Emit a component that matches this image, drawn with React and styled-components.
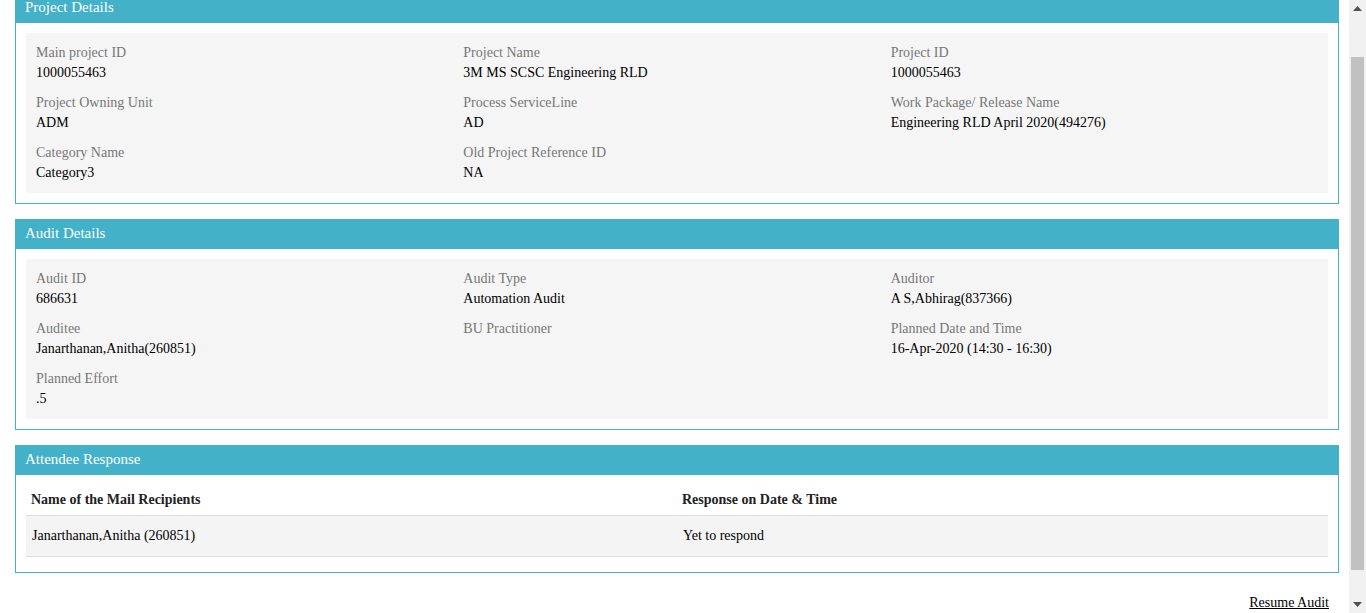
import React, {useLayoutEffect, useRef} from 'react';
import styled, {createGlobalStyle} from "styled-components";

const GlobalStyle = createGlobalStyle`
  html, body {
    margin: 0;
    padding: 0;
    height: 100%;
    overflow: hidden;
    background: #fff;
  }

  body {
    font-family: 'Liberation Serif', 'Times New Roman', serif;
    font-size: 14px;
    color: #000;
  }
`;

const Screen = styled.div`
  display: flex;
  height: 100vh;
`;

const Viewport = styled.div`
  flex: 1;
  min-width: 0;
  overflow: hidden;
`;

const Page = styled.div`
  padding: 0 10px 40px 15px;
`;

const Panel = styled.section`
  border: 1px solid #43b1c8;
  margin-bottom: 15px;
  background: #fff;
`;

const PanelHeading = styled.div`
  background: #43b1c8;
  color: #fff;
  height: 29px;
  line-height: 27px;
  padding: 0 9px;
  box-sizing: border-box;
  font-size: 15px;
`;

const PanelBody = styled.div`
  padding: ${({table}) => table ? '10px 10px 15px' : '10px'};
`;

const InfoGrid = styled.div`
  display: grid;
  grid-template-columns: repeat(3, 1fr);
  background: #f5f5f5;
  padding: 10px 10px 0;
`;

const Field = styled.div`
  margin-bottom: 10px;
  min-height: 40px;
`;

const FieldLabel = styled.div`
  color: #777;
  line-height: 20px;
`;

const FieldValue = styled.div`
  color: #000;
  line-height: 20px;
`;

const Table = styled.table`
  width: 100%;
  border-collapse: collapse;
`;

const Th = styled.th`
  width: 50%;
  text-align: left;
  font-weight: bold;
  color: #222;
  height: 30px;
  line-height: 20px;
  padding: 0 5px;
  border-bottom: 1px solid #ddd;
`;

const Td = styled.td`
  background: #f4f4f4;
  height: 40px;
  line-height: 20px;
  padding: 0 6px;
  border-bottom: 1px solid #ddd;
`;

const Footer = styled.div`
  display: flex;
  justify-content: flex-end;
  padding: 7px 10px 0 0;
`;

const ResumeLink = styled.a`
  color: #000;
  text-decoration: underline;
  cursor: pointer;
`;

const ScrollTrack = styled.div`
  width: 17px;
  flex-shrink: 0;
  background: #f1f1f1;
  display: flex;
  flex-direction: column;
  align-items: center;
`;

const Arrow = styled.div`
  height: 17px;
  width: 17px;
  display: flex;
  align-items: center;
  justify-content: center;
`;

const ThumbArea = styled.div`
  flex: 1;
  width: 100%;
  padding: 40px 2px 26px;
  box-sizing: border-box;
  display: flex;
`;

const Thumb = styled.div`
  flex: 1;
  background: #c1c1c1;
`;

const projectFields = [
    ['Main project ID', '1000055463'],
    ['Project Name', '3M MS SCSC Engineering RLD'],
    ['Project ID', '1000055463'],
    ['Project Owning Unit', 'ADM'],
    ['Process ServiceLine', 'AD'],
    ['Work Package/ Release Name', 'Engineering RLD April 2020(494276)'],
    ['Category Name', 'Category3'],
    ['Old Project Reference ID', 'NA'],
];

const auditFields = [
    ['Audit ID', '686631'],
    ['Audit Type', 'Automation Audit'],
    ['Auditor', 'A S,Abhirag(837366)'],
    ['Auditee', 'Janarthanan,Anitha(260851)'],
    ['BU Practitioner', ''],
    ['Planned Date and Time', '16-Apr-2020 (14:30 - 16:30)'],
    ['Planned Effort', '.5'],
];

const InfoPanel = ({title, fields}) => (
    <Panel>
        <PanelHeading>{title}</PanelHeading>
        <PanelBody>
            <InfoGrid>
                {fields.map(([label, value]) => (
                    <Field key={label}>
                        <FieldLabel>{label}</FieldLabel>
                        <FieldValue>{value}</FieldValue>
                    </Field>
                ))}
            </InfoGrid>
        </PanelBody>
    </Panel>
);

const Scrollbar = () => (
    <ScrollTrack>
        <Arrow>
            <svg width="9" height="5" viewBox="0 0 9 5"><path d="M0 5 L4.5 0 L9 5 Z" fill="#505050"/></svg>
        </Arrow>
        <ThumbArea><Thumb/></ThumbArea>
        <Arrow>
            <svg width="9" height="5" viewBox="0 0 9 5"><path d="M0 0 L9 0 L4.5 5 Z" fill="#505050"/></svg>
        </Arrow>
    </ScrollTrack>
);

const App = () => {
    const viewRef = useRef(null);

    useLayoutEffect(() => {
        if (viewRef.current) viewRef.current.scrollTop = 7;
    }, []);

    return (
        <Screen>
            <GlobalStyle/>
            <Viewport ref={viewRef}>
                <Page>
                    <InfoPanel title="Project Details" fields={projectFields}/>
                    <InfoPanel title="Audit Details" fields={auditFields}/>
                    <Panel>
                        <PanelHeading>Attendee Response</PanelHeading>
                        <PanelBody table>
                            <Table>
                                <thead>
                                <tr>
                                    <Th>Name of the Mail Recipients</Th>
                                    <Th>Response on Date &amp; Time</Th>
                                </tr>
                                </thead>
                                <tbody>
                                <tr>
                                    <Td>Janarthanan,Anitha (260851)</Td>
                                    <Td>Yet to respond</Td>
                                </tr>
                                </tbody>
                            </Table>
                        </PanelBody>
                    </Panel>
                    <Footer>
                        <ResumeLink>Resume Audit</ResumeLink>
                    </Footer>
                </Page>
            </Viewport>
            <Scrollbar/>
        </Screen>
    );
};

export default App;
